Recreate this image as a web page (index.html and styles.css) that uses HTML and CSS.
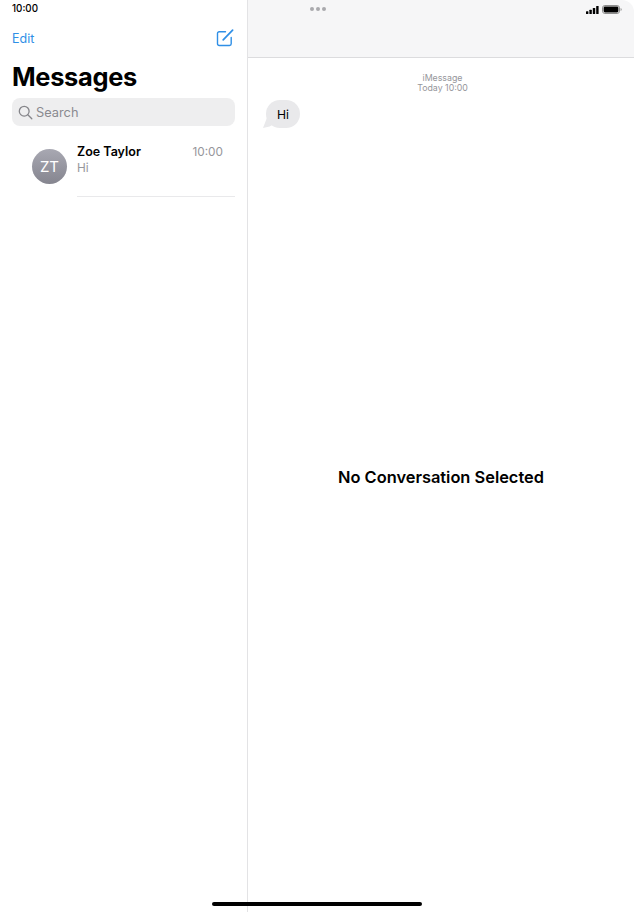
FILE: index.html
```html
<!DOCTYPE html>
<html lang="en">
<head>
    <meta charset="UTF-8">
    <meta name="viewport" content="width=device-width, initial-scale=1.0">
    <title>Messages</title>
    <link rel="stylesheet" href="styles.css">
</head>
<body>
    <div class="app">
        <aside class="sidebar">
            <div class="clock">10:00</div>
            <div class="toolbar">
                <span class="edit">Edit</span>
                <svg class="compose" width="18" height="18" viewBox="0 0 18 18" fill="none" stroke="#2f8fe6" stroke-width="1.4" stroke-linecap="round">
                    <path d="M9.5 2.8H3.2A1.7 1.7 0 0 0 1.5 4.5v10.3a1.7 1.7 0 0 0 1.7 1.7h10.3a1.7 1.7 0 0 0 1.7-1.7V8.5"/>
                    <path d="M7.2 10.8 16.6 1.2" stroke-width="1.7"/>
                </svg>
            </div>
            <h1 class="title">Messages</h1>
            <div class="search">
                <svg width="15" height="15" viewBox="0 0 15 15" fill="none" stroke="#85858a" stroke-width="1.3" stroke-linecap="round">
                    <circle cx="6.2" cy="6.2" r="4.9"/>
                    <path d="M9.8 9.8 13.8 13.8"/>
                </svg>
                <span>Search</span>
            </div>
            <div class="conversation">
                <div class="avatar">ZT</div>
                <div class="conversation-body">
                    <div class="conversation-top">
                        <span class="name">Zoe Taylor</span>
                        <span class="time">10:00</span>
                    </div>
                    <div class="preview">Hi</div>
                </div>
            </div>
        </aside>
        <main class="detail">
            <header class="detail-header">
                <div class="dots"><i></i><i></i><i></i></div>
                <div class="status-icons">
                    <svg width="14" height="8" viewBox="0 0 14 8" fill="#000">
                        <rect x="0" y="5.2" width="2.4" height="2.8" rx=".5"/>
                        <rect x="3.4" y="3.8" width="2.4" height="4.2" rx=".5"/>
                        <rect x="6.8" y="2" width="2.4" height="6" rx=".5"/>
                        <rect x="10.2" y="0" width="2.4" height="8" rx=".5"/>
                    </svg>
                    <svg width="20" height="9" viewBox="0 0 20 9">
                        <rect x=".5" y=".5" width="17" height="8" rx="2.4" fill="none" stroke="#8e8e8e"/>
                        <rect x="1.6" y="1.6" width="14.8" height="5.8" rx="1.4" fill="#000"/>
                        <path d="M18.6 3v3a1.6 1.6 0 0 0 0-3z" fill="#8e8e8e"/>
                    </svg>
                </div>
            </header>
            <div class="thread">
                <div class="thread-meta">iMessage<br>Today 10:00</div>
                <div class="bubble">Hi</div>
            </div>
            <div class="empty">No Conversation Selected</div>
        </main>
    </div>
    <div class="home-bar"></div>
</body>
</html>
```

FILE: styles.css
```css
html, body {
    margin: 0;
    padding: 0;
    height: 100%;
}
body {
    font-family: Inter, 'Liberation Sans', sans-serif;
    background: #ffffff;
    color: #000000;
    overflow: hidden;
}
.app {
    display: flex;
    height: 912px;
}
.sidebar {
    width: 247px;
    flex-shrink: 0;
    border-right: 1px solid #e3e3e5;
    box-sizing: content-box;
}
.clock {
    font-size: 9.8px;
    font-weight: 500;
    line-height: 12px;
    padding: 3px 0 0 12px;
}
.toolbar {
    display: flex;
    justify-content: space-between;
    align-items: center;
    height: 24px;
    margin-top: 11px;
    padding: 0 13px 0 12px;
}
.edit {
    font-size: 12.5px;
    color: #2f8fe6;
}
.title {
    font-size: 25.4px;
    font-weight: 700;
    line-height: 32px;
    margin: 11px 0 0 12px;
    letter-spacing: -0.3px;
}
.search {
    display: flex;
    align-items: center;
    gap: 3px;
    height: 28px;
    margin: 5px 12px 0;
    padding-left: 6px;
    background: #eeeeef;
    border-radius: 8px;
    font-size: 12.8px;
    color: #8a8a8f;
}
.conversation {
    display: flex;
    align-items: center;
    margin-top: 9px;
    padding-left: 32px;
    height: 62px;
}
.avatar {
    width: 35px;
    height: 35px;
    flex-shrink: 0;
    border-radius: 50%;
    background: linear-gradient(180deg, #a8a8b2 0%, #85858f 100%);
    color: #ffffff;
    font-size: 15px;
    line-height: 35px;
    text-align: center;
}
.conversation-body {
    flex: 1;
    margin: 0 12px 0 10px;
    height: 62px;
    box-sizing: border-box;
    padding: 9px 12px 0 0;
    border-bottom: 1px solid #e9e9eb;
}
.conversation-top {
    display: flex;
    justify-content: space-between;
    align-items: center;
}
.name {
    font-size: 12.5px;
    font-weight: 600;
}
.time {
    font-size: 11.8px;
    color: #96969b;
}
.preview {
    font-size: 11.8px;
    color: #96969b;
    margin-top: 2px;
}
.detail {
    flex: 1;
    display: flex;
    flex-direction: column;
}
.detail-header {
    display: flex;
    justify-content: space-between;
    height: 57px;
    box-sizing: content-box;
    background: #f6f6f7;
    border-bottom: 1px solid #dcdcde;
    border-top-right-radius: 12px;
    padding: 0 12px 0 62px;
}
.dots {
    display: flex;
    gap: 2px;
    height: 4px;
    margin-top: 7px;
}
.dots i {
    width: 4px;
    height: 4px;
    border-radius: 50%;
    background: #a9a9ad;
}
.status-icons {
    display: flex;
    align-items: center;
    gap: 2px;
    height: 9px;
    margin-top: 5px;
}
.thread {
    padding: 15px 15px 0 18px;
}
.thread-meta {
    font-size: 8.8px;
    line-height: 10px;
    color: #96969b;
    text-align: center;
}
.bubble {
    position: relative;
    width: max-content;
    margin-top: 7px;
    padding: 0 11px;
    height: 28px;
    line-height: 30px;
    font-size: 12.2px;
    background: #e9e9eb;
    border-radius: 14px;
}
/* little tail on the bubble */
.bubble::before {
    content: "";
    position: absolute;
    left: -3px;
    bottom: 0;
    width: 11px;
    height: 10px;
    background: #e9e9eb;
    clip-path: polygon(0 100%, 35% 0, 100% 60%, 60% 85%);
}
.empty {
    margin-top: 339px;
    font-size: 16.4px;
    font-weight: 600;
    text-align: center;
}
.home-bar {
    position: absolute;
    left: 212px;
    top: 902px;
    width: 210px;
    height: 4px;
    background: #000000;
    border-radius: 2px;
}
```
